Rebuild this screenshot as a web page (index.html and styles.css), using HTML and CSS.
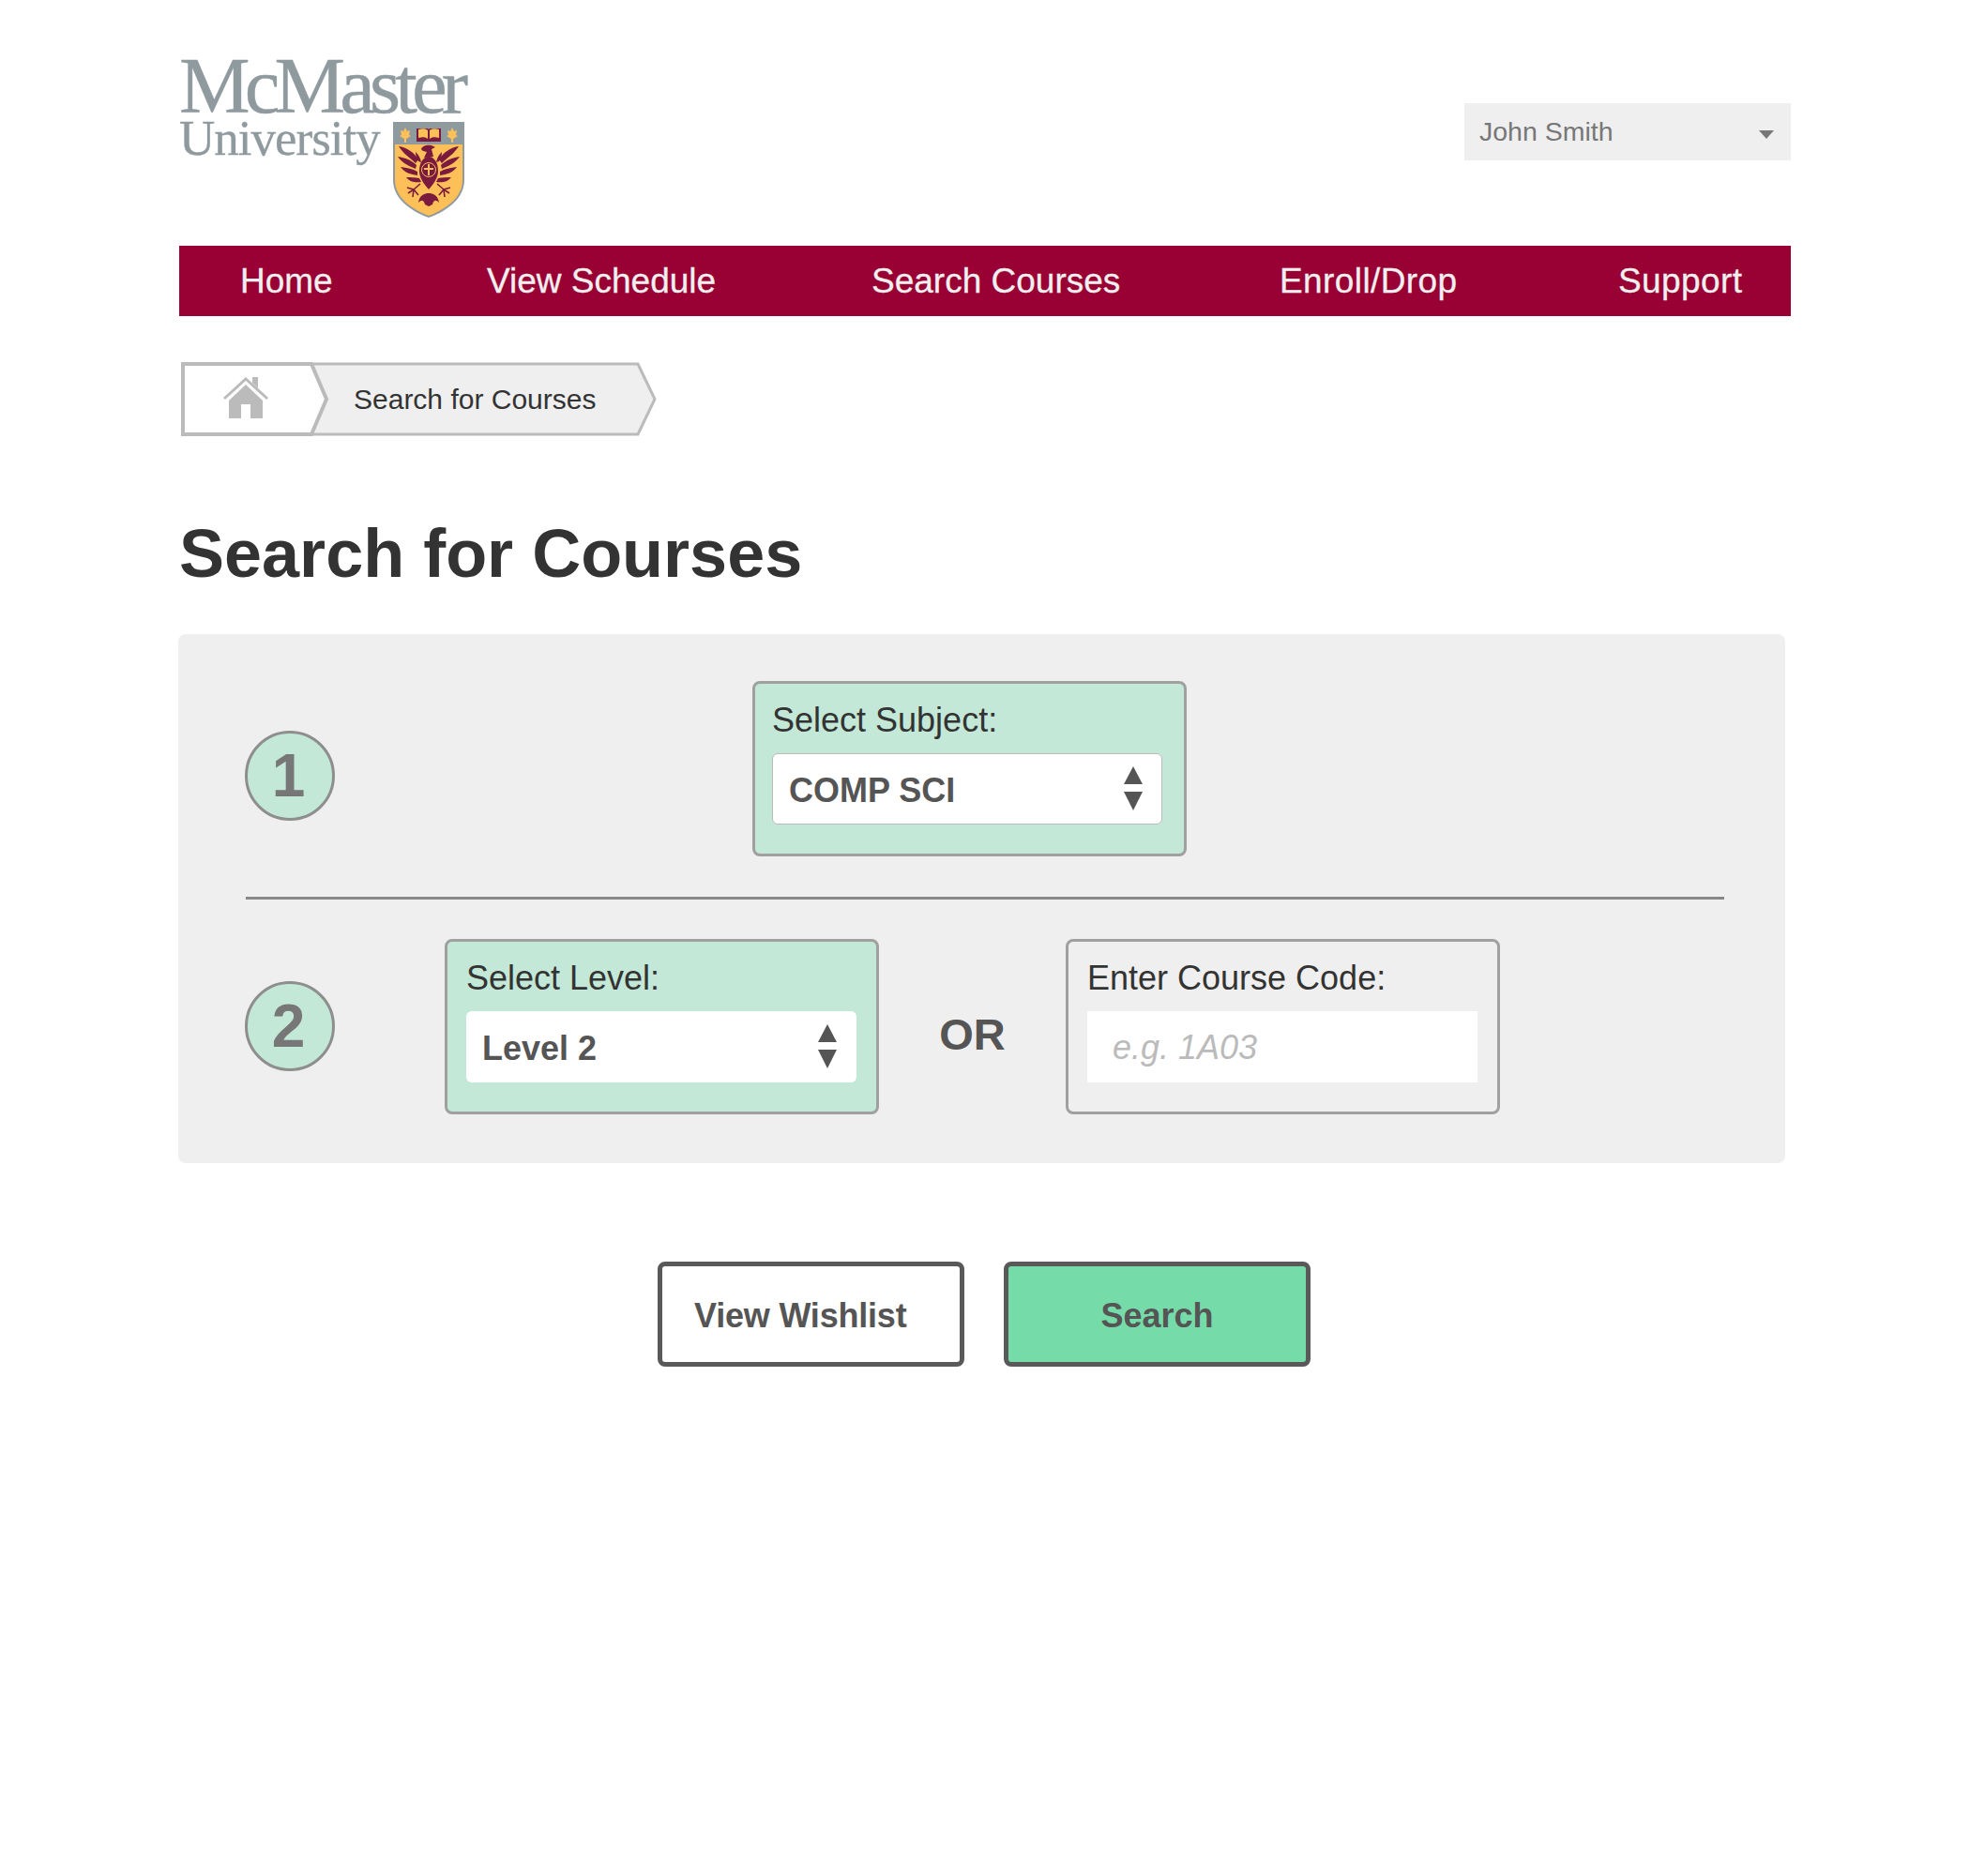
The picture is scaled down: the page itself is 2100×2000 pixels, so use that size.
FILE: index.html
```html
<!DOCTYPE html>
<html lang="en">
<head>
    <meta charset="UTF-8">
    <title>Search for Courses</title>
    <link rel="stylesheet" href="styles.css">
</head>
<body>
    <div class="page">
        <header class="top-bar">
            <div class="logo">
                <div class="logo-name">McMaster</div>
                <div class="logo-university">University</div>
                <svg class="logo-shield" viewBox="0 0 76 102">
                    <defs>
                        <g id="eagleSide">
                            <path d="M6 26C14 27 22 32 27 40L24 44C18 38 11 34 6 26Z"/>
                            <path d="M5 37C13 38 20 41 25 46L24 50C17 47 10 44 5 37Z"/>
                            <path d="M8 48C15 49 21 50 26 53L26 57C19 56 12 54 8 48Z"/>
                            <path d="M14 59C19 59 24 59 28 60L30 64C24 65 18 64 14 59Z"/>
                            <path d="M24 32C27 35 29 38 30 43L27 42C25 39 24 36 24 32Z"/>
                            <path d="M29 66L22 72M22 72L15 70M22 72L16 76M22 72L21 80M22 72L27 78" fill="none" stroke="#7a1a3e" stroke-width="1.6"/>
                        </g>
                    </defs>
                    <path d="M0 0H76V62C76 80 60 94 38 102C16 94 0 80 0 62Z" fill="#8f9a9f"/>
                    <path d="M2 24H74V62C74 79 59 92 38 100C17 92 2 79 2 62Z" fill="#fdbf57"/>
                    <path d="M13 6L15 10L18 9L17 14L19 15L14 18V22H12V18L7 15L9 14L8 9L11 10Z" fill="#fdbf57"/>
                    <path d="M63 6L65 10L68 9L67 14L69 15L64 18V22H62V18L57 15L59 14L58 9L61 10Z" fill="#fdbf57"/>
                    <path d="M25 7H37L38 8L39 7H51V21H25Z" fill="#7a1a3e"/>
                    <path d="M27 8C31 7 35 7 37 9V18C35 16 31 16 27 17ZM49 8C45 7 41 7 39 9V18C41 16 45 16 49 17Z" fill="#fdbf57"/>
                    <g fill="#7a1a3e">
                        <use href="#eagleSide"/>
                        <use href="#eagleSide" transform="matrix(-1 0 0 1 76 0)"/>
                        <path d="M30 29C31 25 37 24 41 25L45 27L41 29L43 37L33 38L36 32C33 31 31 31 30 29Z"/>
                        <path d="M38 37C44 37 48 44 48 52C48 60 43 66 38 72C33 66 28 60 28 52C28 44 32 37 38 37Z"/>
                        <path d="M27 86C28 78 34 76 38 76C42 76 48 78 49 86C45 82 43 84 42 88L38 90L34 88C33 84 31 82 27 86Z"/>
                    </g>
                    <circle cx="38" cy="51" r="7.5" fill="none" stroke="#fdbf57" stroke-width="1"/>
                    <path d="M38 45V57M33 50H43" fill="none" stroke="#fdbf57" stroke-width="2"/>
                </svg>
            </div>
            <div class="user-menu">
                <span>John Smith</span>
                <span class="user-caret"></span>
            </div>
        </header>

        <nav class="main-nav">
            <a href="#">Home</a>
            <a href="#">View Schedule</a>
            <a href="#">Search Courses</a>
            <a href="#">Enroll/Drop</a>
            <a href="#">Support</a>
        </nav>

        <div class="breadcrumb">
            <svg class="crumb-shape" viewBox="0 0 510 79">
                <path d="M139 2H487L505 39.5L487 77H139L155 39.5Z" fill="#efefef" stroke="#bbb" stroke-width="3"/>
                <path d="M2 2H139L155 39.5L139 77H2Z" fill="#fff" stroke="#bbb" stroke-width="4"/>
                <path d="M46 39L69 18L92 39" fill="none" stroke="#bbb" stroke-width="3"/>
                <path d="M76 16H82V28L76 22Z" fill="#bbb"/>
                <path d="M51 41L69 24L87 41V60H74V45H64V60H51Z" fill="#bbb"/>
            </svg>
            <span class="crumb-label">Search for Courses</span>
        </div>

        <h1 class="page-title">Search for Courses</h1>

        <form class="search-panel">
            <div class="step-row step-one">
                <div class="step-circle">1</div>
                <div class="field-box active">
                    <label for="subject">Select Subject:</label>
                    <div class="select-wrap">
                        <select id="subject"><option>COMP SCI</option></select>
                        <svg class="select-arrows" viewBox="0 0 20 47"><path d="M10 0L20 19H0ZM0 27H20L10 47Z" fill="#555"/></svg>
                    </div>
                </div>
            </div>
            <hr class="divider">
            <div class="step-row step-two">
                <div class="step-circle">2</div>
                <div class="field-box active">
                    <label for="level">Select Level:</label>
                    <div class="select-wrap">
                        <select id="level" class="no-border"><option>Level 2</option></select>
                        <svg class="select-arrows" viewBox="0 0 20 47"><path d="M10 0L20 19H0ZM0 27H20L10 47Z" fill="#555"/></svg>
                    </div>
                </div>
                <div class="or-label">OR</div>
                <div class="field-box">
                    <label for="code">Enter Course Code:</label>
                    <input id="code" type="text" placeholder="e.g. 1A03">
                </div>
            </div>
        </form>

        <div class="actions">
            <button type="button" class="btn btn-wishlist">View Wishlist</button>
            <button type="submit" class="btn btn-search">Search</button>
        </div>
    </div>
</body>
</html>
```

FILE: styles.css
```css
* {
    margin: 0;
    padding: 0;
    box-sizing: border-box;
}

body {
    font-family: 'Liberation Sans', Arial, sans-serif;
    background: #fff;
    color: #333;
}

.page {
    width: 1718px;
    margin-left: 191px;
    height: 2000px;
}

.top-bar {
    height: 262px;
    display: flex;
    justify-content: space-between;
    align-items: flex-start;
}

.logo {
    display: grid;
    grid-template-columns: 228px 76px;
    width: 320px;
    padding-top: 58px;
    color: #8f9a9f;
    font-family: 'Liberation Serif', serif;
}

.logo-name {
    grid-column: 1 / 3;
    font-size: 85px;
    line-height: 66px;
    margin-bottom: 1px;
    letter-spacing: -5.9px;
    white-space: nowrap;
    -webkit-text-stroke: 0.4px #8f9a9f;
}

.logo-university {
    font-size: 53px;
    line-height: 44px;
    letter-spacing: -1px;
    white-space: nowrap;
    -webkit-text-stroke: 0.3px #8f9a9f;
}

.logo-shield {
    width: 76px;
    height: 102px;
    margin-top: 5px;
}

.user-menu {
    margin-top: 110px;
    width: 348px;
    height: 61px;
    background: #efefef;
    color: #777;
    font-size: 28.5px;
    display: flex;
    justify-content: space-between;
    align-items: center;
    padding: 0 18px 0 16px;
}

.user-caret {
    border-left: 8px solid transparent;
    border-right: 8px solid transparent;
    border-top: 9px solid #777;
    margin-top: 6px;
}

.main-nav {
    height: 75px;
    background: #990033;
    display: grid;
    grid-template-columns: 263px 410px 435px 361px auto;
    align-items: center;
    padding-left: 65px;
}

.main-nav a {
    color: #efefef;
    font-size: 37px;
    text-decoration: none;
    -webkit-text-stroke: 0.3px #efefef;
}

.main-nav a:nth-child(n+4) {
    letter-spacing: 0.4px;
}

.breadcrumb {
    position: relative;
    margin: 49px 0 0 2px;
    width: 510px;
    height: 79px;
}

.crumb-shape {
    width: 510px;
    height: 79px;
    display: block;
}

.crumb-label {
    position: absolute;
    left: 184px;
    top: 23px;
    font-size: 30px;
    color: #333;
}

.page-title {
    margin-top: 80px;
    font-size: 72px;
    line-height: 90px;
    color: #333;
    font-weight: bold;
}

.search-panel {
    margin-top: 41px;
    margin-left: -1px;
    width: 1713px;
    height: 564px;
    background: #efefef;
    border-radius: 8px;
    padding: 50px 65px 0 72px;
}

.step-row {
    display: flex;
    align-items: center;
}

.step-circle {
    flex: none;
    width: 96px;
    height: 96px;
    margin-left: -1px;
    border: 3px solid #8e8e8e;
    border-radius: 50%;
    background: #c3e8d7;
    color: #777;
    font-size: 64px;
    font-weight: bold;
    text-align: center;
    line-height: 90px;
    padding-right: 3px;
}

.step-one .step-circle {
    margin-top: 15px;
}

.step-two .step-circle {
    margin-bottom: 2px;
}

.step-one .field-box {
    margin-left: 445px;
    padding-left: 18px;
}

.step-two .field-box:nth-child(2) {
    margin-left: 117px;
}

.field-box {
    width: 463px;
    height: 187px;
    border: 3px solid #a0a0a0;
    border-radius: 8px;
    padding: 19px 20px 0;
}

.field-box.active {
    background: #c3e8d7;
}

.field-box label {
    display: block;
    font-size: 36px;
    line-height: 40px;
    margin-bottom: 15px;
    color: #333;
}

.select-wrap {
    position: relative;
    width: 416px;
    height: 76px;
}

.select-wrap select {
    appearance: none;
    width: 100%;
    height: 100%;
    background: #fff;
    border: 1px solid #bbb;
    border-radius: 6px;
    padding: 3px 0 0 17px;
    font-family: inherit;
    font-size: 36px;
    font-weight: bold;
    color: #555;
}

.select-wrap select.no-border {
    border: none;
}

.select-arrows {
    position: absolute;
    right: 21px;
    top: 14px;
    width: 20px;
    height: 47px;
}

.field-box input {
    display: block;
    width: 416px;
    height: 76px;
    background: #fff;
    border: none;
    padding: 2px 0 0 27px;
    font-family: inherit;
    font-size: 36px;
    font-style: italic;
}

.field-box input::placeholder {
    color: #bbb;
}

.or-label {
    width: 199px;
    text-align: center;
    font-size: 47px;
    font-weight: bold;
    color: #555;
    padding-top: 16px;
}

.divider {
    border: none;
    height: 3px;
    background: #888;
    margin: 43px 0 42px;
}

.actions {
    display: flex;
    gap: 42px;
    margin: 105px 0 0 510px;
}

.btn {
    width: 327px;
    height: 112px;
    border: 5px solid #595959;
    border-radius: 8px;
    padding-top: 4px;
    font-family: inherit;
    font-size: 36px;
    font-weight: bold;
    color: #555;
    cursor: pointer;
}

.btn-wishlist {
    background: #fff;
    text-align: left;
    padding-left: 34px;
    letter-spacing: -0.2px;
}

.btn-search {
    background: #75dca9;
}
```
